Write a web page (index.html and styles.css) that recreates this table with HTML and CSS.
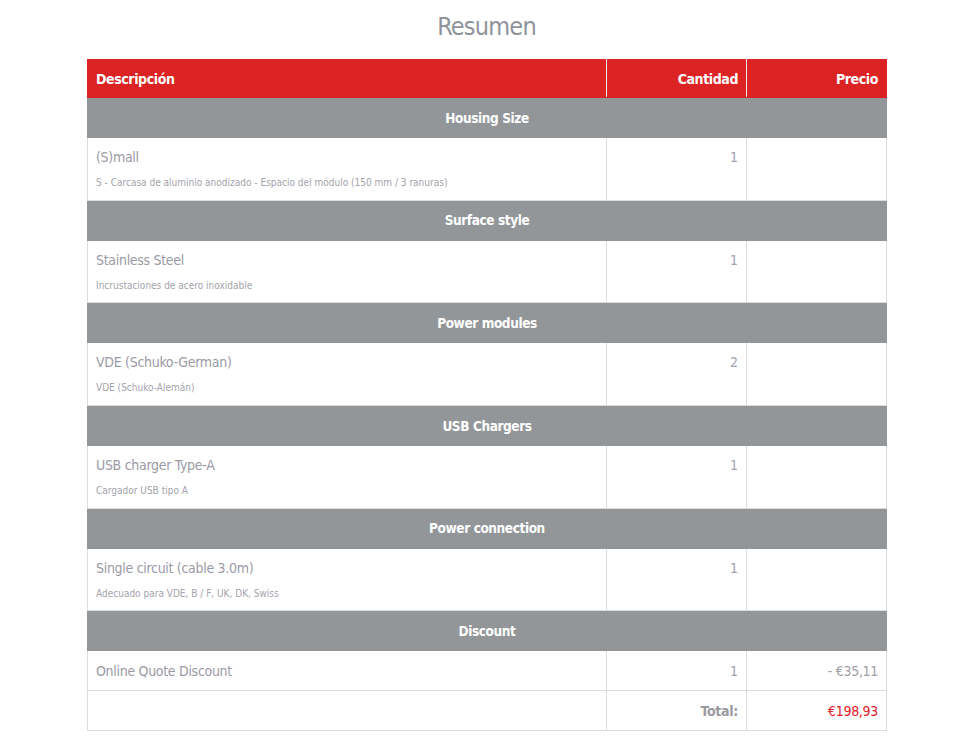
FILE: index.html
```html
<!DOCTYPE html>
<html lang="es">
<head>
<meta charset="utf-8">
<title>Resumen</title>
<link rel="stylesheet" href="styles.css">
</head>
<body>
<div class="page">
  <h1 class="title">Resumen</h1>
  <table class="summary">
    <colgroup>
      <col class="c-desc"><col class="c-qty"><col class="c-price">
    </colgroup>
    <thead>
      <tr class="head">
        <th class="left">Descripción</th>
        <th class="right">Cantidad</th>
        <th class="right">Precio</th>
      </tr>
    </thead>
    <tbody>
      <tr class="group"><td colspan="3">Housing Size</td></tr>
      <tr class="item">
        <td><div class="name">(S)mall</div><div class="sub">S - Carcasa de aluminio anodizado - Espacio del módulo (150 mm / 3 ranuras)</div></td>
        <td class="qty">1</td><td class="price"></td>
      </tr>
      <tr class="group"><td colspan="3">Surface style</td></tr>
      <tr class="item">
        <td><div class="name">Stainless Steel</div><div class="sub">Incrustaciones de acero inoxidable</div></td>
        <td class="qty">1</td><td class="price"></td>
      </tr>
      <tr class="group"><td colspan="3">Power modules</td></tr>
      <tr class="item">
        <td><div class="name">VDE (Schuko-German)</div><div class="sub">VDE (Schuko-Alemán)</div></td>
        <td class="qty">2</td><td class="price"></td>
      </tr>
      <tr class="group"><td colspan="3">USB Chargers</td></tr>
      <tr class="item">
        <td><div class="name">USB charger Type-A</div><div class="sub">Cargador USB tipo A</div></td>
        <td class="qty">1</td><td class="price"></td>
      </tr>
      <tr class="group"><td colspan="3">Power connection</td></tr>
      <tr class="item">
        <td><div class="name">Single circuit (cable 3.0m)</div><div class="sub">Adecuado para VDE, B / F, UK, DK, Swiss</div></td>
        <td class="qty">1</td><td class="price"></td>
      </tr>
      <tr class="group"><td colspan="3">Discount</td></tr>
      <tr class="item short">
        <td><div class="name">Online Quote Discount</div></td>
        <td class="qty">1</td><td class="price">- €35,11</td>
      </tr>
      <tr class="total">
        <td></td>
        <td class="label">Total:</td>
        <td class="amount">€198,93</td>
      </tr>
    </tbody>
  </table>
</div>
</body>
</html>
```

FILE: styles.css
```css
html, body {
  margin: 0;
  padding: 0;
  background: #ffffff;
}
body {
  font-family: "DejaVu Sans", sans-serif;
  font-stretch: condensed;
  color: #9a9aa6;
}
.page {
  padding: 9px 0 0 87px;
}
.title {
  margin: 0 0 14px 0;
  width: 799px;
  text-align: center;
  font-size: 25px;
  font-weight: normal;
  color: #8f939a;
  line-height: 36px;
  letter-spacing: -0.8px;
}
.summary {
  width: 799px;
  border-collapse: collapse;
  table-layout: fixed;
}
.c-desc { width: 519px; }
.c-qty { width: 140px; }
.c-price { width: 140px; }
.summary th, .summary td {
  border: 1px solid #dcdcdc;
}
.head th {
  background: #dc2323;
  color: #ffffff;
  font-weight: bold;
  font-size: 14px;
  letter-spacing: -0.4px;
  height: 37px;
  padding: 0 8px;
  border-color: #dc2323;
  border-right-color: #ededed;
}
.head th:last-child { border-right-color: #dc2323; }
.left { text-align: left; }
.right { text-align: right; }
.group td {
  background: #939699;
  color: #ffffff;
  text-align: center;
  font-weight: bold;
  font-size: 13.5px;
  letter-spacing: -0.4px;
  height: 39px;
  padding: 0;
  border-color: #939699;
}
.item td {
  height: 62.7px;
  vertical-align: top;
  padding: 9px 8px 0 8px;
  box-sizing: border-box;
}
.item.short td {
  height: 40px;
  vertical-align: middle;
  padding-top: 0;
}
.name {
  font-size: 14px;
  letter-spacing: -0.3px;
  line-height: 20px;
  color: #9a9aa6;
}
.sub {
  margin-top: 9px;
  font-size: 10px;
  line-height: 14px;
  color: #a3a3ab;
}
.qty {
  text-align: right;
  font-size: 14px;
  line-height: 20px;
  color: #a3a3b4;
}
.price {
  text-align: right;
  font-size: 14px;
  letter-spacing: -0.3px;
  color: #a0a0a8;
}
.total td {
  height: 39px;
  padding: 0 8px;
  text-align: right;
  font-size: 14px;
  letter-spacing: -0.3px;
}
.total .label {
  font-weight: bold;
  color: #9a9aa0;
}
.total .amount {
  color: #e0202a;
}
```
